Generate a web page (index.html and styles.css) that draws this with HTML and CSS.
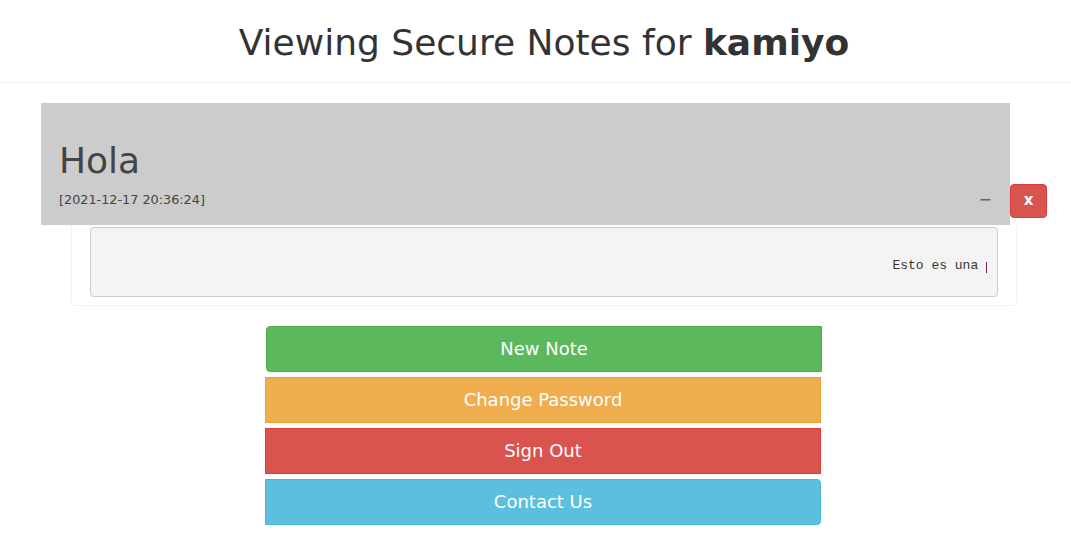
FILE: index.html
```html
<!DOCTYPE html>
<html>
<head>
<meta charset="utf-8">
<link rel="stylesheet" href="styles.css">
</head>
<body>
<header class="header">
  <h1 class="title">Viewing Secure Notes for <b>kamiyo</b></h1>
</header>
<main class="main">
  <div class="note-row">
    <div class="note-head">
      <h2 class="note-title">Hola</h2>
      <div class="note-meta">
        <span class="note-date">[2021-12-17 20:36:24]</span>
        <span class="note-min">&minus;</span>
      </div>
    </div>
    <button class="close-btn">x</button>
  </div>
  <div class="note-body">
    <div class="note-text">Esto es una&nbsp;<span class="caret"></span></div>
  </div>
  <div class="actions">
    <button class="btn btn-green">New Note</button>
    <button class="btn btn-orange">Change Password</button>
    <button class="btn btn-red">Sign Out</button>
    <button class="btn btn-blue">Contact Us</button>
  </div>
</main>
</body>
</html>
```
FILE: styles.css
```css
* { box-sizing: border-box; }
html, body { margin: 0; padding: 0; background: #fff; }
body {
  font-family: "DejaVu Sans", sans-serif;
  color: #333;
  width: 1071px;
  height: 556px;
  overflow: hidden;
}
.header {
  border-bottom: 1px solid #eee;
  padding: 22px 0 18px 17px;
  text-align: center;
}
.title {
  margin: 0;
  font-size: 36px;
  line-height: 42px;
  font-weight: normal;
  color: #333;
}
.title b { font-weight: bold; }
.main {
  display: flex;
  flex-direction: column;
}
.note-row {
  display: flex;
  align-items: flex-start;
  margin: 20px 0 0 41px;
}
.note-head {
  width: 969px;
  height: 122px;
  background: #ccc;
  padding: 37px 18px 0 18px;
}
.note-title {
  margin: 0;
  font-size: 36px;
  line-height: 42px;
  font-weight: normal;
  color: #444;
}
.note-meta {
  display: flex;
  justify-content: space-between;
  align-items: center;
  margin-top: 10px;
  font-size: 12.8px;
  line-height: 15px;
  color: #444;
}
.note-min {
  color: #666;
  font-size: 16px;
  line-height: 15px;
  margin-right: 0;
}
.close-btn {
  margin-top: 81px;
  width: 37px;
  height: 34px;
  border: 1px solid #d43f3a;
  border-radius: 4px;
  background: #d9534f;
  color: #fff;
  font-family: "DejaVu Sans", sans-serif;
  font-weight: bold;
  font-size: 15px;
  padding: 0 0 2px;
}
.note-body {
  margin-left: 71px;
  width: 946px;
  border: 1px solid #f2f2f2;
  border-top: none;
  border-radius: 0 0 4px 4px;
  padding: 2px 18px 8px 18px;
}
.note-text {
  height: 70px;
  background: #f4f4f4;
  border: 1px solid #ccc;
  border-radius: 4px;
  display: flex;
  justify-content: flex-end;
  align-items: center;
  padding: 7px 10px 0 0;
  font-family: "Liberation Mono", monospace;
  font-size: 13px;
  color: #333;
}
.caret {
  display: inline-block;
  width: 1px;
  height: 11px;
  background: #7a1f4f;
  margin-top: 3px;
}
.actions {
  display: flex;
  flex-direction: column;
  gap: 5px;
  margin: 20px 0 0 265px;
  width: 556px;
}
.btn {
  height: 46px;
  width: 556px;
  border: 1px solid;
  border-radius: 0;
  color: #fff;
  font-family: "DejaVu Sans", sans-serif;
  font-size: 18px;
  padding: 0 0 2px;
}
.btn-green {
  background: #5cb85c;
  border-color: #4cae4c;
  border-radius: 4px 0 0 4px;
  margin-left: 1px;
}
.btn-orange { background: #f0ad4e; border-color: #eea236; }
.btn-red { background: #d9534f; border-color: #d43f3a; }
.btn-blue {
  background: #5bc0de;
  border-color: #46b8da;
  border-radius: 0 4px 4px 0;
}
```
